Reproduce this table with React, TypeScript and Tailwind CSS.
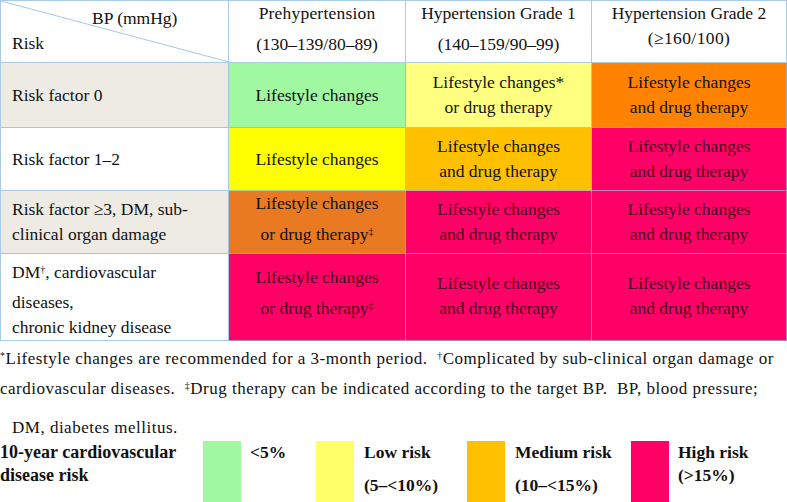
import React from 'react';

type CellProps = {
  bg?: string;
  className?: string;
  children: React.ReactNode;
};

const Cell: React.FC<CellProps> = ({ bg = 'bg-white', className = '', children }) => (
  <div className={`${bg} border-r border-b border-[#8cb8e0]/75 flex flex-col ${className}`}>
    {children}
  </div>
);

const L: React.FC<{ className?: string; children: React.ReactNode }> = ({ className = '', children }) => (
  <span className={`block leading-[25px] whitespace-nowrap ${className}`}>{children}</span>
);

const Sup: React.FC<{ children: React.ReactNode }> = ({ children }) => (
  <sup className="text-[10px]">{children}</sup>
);

const pink = 'bg-[#ff0066] text-[#4a0020]';

export default function App() {
  return (
    <div className="w-[787px] h-[502px] bg-white text-[#111] [font-family:Liberation_Serif,Times_New_Roman,serif] text-[17.5px] overflow-hidden">
      {/* table */}
      <div className="grid grid-cols-[228px_177px_186px_1fr] grid-rows-[62px_65px_63px_63px_87px] border-l border-t border-[#8cb8e0]/75">
        <Cell className="relative pt-[5px]">
          <svg className="absolute inset-0" width="228" height="61">
            <line x1="0" y1="0" x2="228" y2="61" stroke="#a7c7e7" strokeWidth="1" />
          </svg>
          <L className="pl-[91px]">BP (mmHg)</L>
          <L className="pl-[11px]">Risk</L>
        </Cell>
        <Cell className="items-center">
          <L className="tracking-[0.2px]">Prehypertension</L>
          <L className="mt-[6px]">(130–139/80–89)</L>
        </Cell>
        <Cell className="items-center">
          <L>Hypertension Grade 1</L>
          <L className="mt-[6px]">(140–159/90–99)</L>
        </Cell>
        <Cell className="items-center">
          <L>Hypertension Grade 2</L>
          <L className="tracking-[0.4px]">(≥160/100)</L>
        </Cell>

        <Cell bg="bg-[#eeebe5]" className="justify-center pl-[11px]">
          <L>Risk factor 0</L>
        </Cell>
        <Cell bg="bg-[#a0f8a0]" className="justify-center items-center">
          <L>Lifestyle changes</L>
        </Cell>
        <Cell bg="bg-[#ffff80]" className="justify-center items-center">
          <L>Lifestyle changes*</L>
          <L>or drug therapy</L>
        </Cell>
        <Cell bg="bg-[#ff8200]" className="justify-center items-center">
          <L>Lifestyle changes</L>
          <L>and drug therapy</L>
        </Cell>

        <Cell className="justify-center pl-[11px]">
          <L>Risk factor 1–2</L>
        </Cell>
        <Cell bg="bg-[#ffff00]" className="justify-center items-center">
          <L>Lifestyle changes</L>
        </Cell>
        <Cell bg="bg-[#ffc000]" className="justify-center items-center">
          <L>Lifestyle changes</L>
          <L>and drug therapy</L>
        </Cell>
        <Cell bg={pink} className="justify-center items-center">
          <L>Lifestyle changes</L>
          <L>and drug therapy</L>
        </Cell>

        <Cell bg="bg-[#eeebe5]" className="justify-center pl-[11px]">
          <L>Risk factor ≥3, DM, sub-</L>
          <L>clinical organ damage</L>
        </Cell>
        <Cell bg="bg-[#e97a22]" className="items-center">
          <L>Lifestyle changes</L>
          <L className="mt-[6px]">
            or drug therapy<Sup>‡</Sup>
          </L>
        </Cell>
        <Cell bg={pink} className="justify-center items-center">
          <L>Lifestyle changes</L>
          <L>and drug therapy</L>
        </Cell>
        <Cell bg={pink} className="justify-center items-center">
          <L>Lifestyle changes</L>
          <L>and drug therapy</L>
        </Cell>

        <Cell className="pl-[11px] pt-[6px]">
          <L>
            DM<Sup>†</Sup>, cardiovascular
          </L>
          <L className="mt-[5px]">diseases,</L>
          <L>chronic kidney disease</L>
        </Cell>
        <Cell bg={pink} className="items-center pt-[11px]">
          <L>Lifestyle changes</L>
          <L className="mt-[6px]">
            or drug therapy<Sup>‡</Sup>
          </L>
        </Cell>
        <Cell bg={pink} className="items-center pt-[17px]">
          <L>Lifestyle changes</L>
          <L>and drug therapy</L>
        </Cell>
        <Cell bg={pink} className="items-center pt-[17px]">
          <L>Lifestyle changes</L>
          <L>and drug therapy</L>
        </Cell>
      </div>

      {/* footnotes */}
      <div className="pt-[6px] text-[17px] tracking-[0.5px]">
        <div className="leading-[24px] whitespace-nowrap">
          <Sup>*</Sup>Lifestyle changes are recommended for a 3-month period.&nbsp; <Sup>†</Sup>Complicated by sub-clinical organ damage or
        </div>
        <div className="mt-[6px] leading-[24px] whitespace-nowrap">
          cardiovascular diseases.&nbsp; <Sup>‡</Sup>Drug therapy can be indicated according to the target BP.&nbsp; BP, blood pressure;
        </div>
        <div className="mt-[15px] leading-[24px] whitespace-nowrap pl-[12px]">DM, diabetes mellitus.</div>
      </div>

      {/* legend */}
      <div className="mt-[1px] h-[62px] grid grid-cols-[203px_38px_75px_38px_113px_38px_126px_38px_1fr] font-bold text-[17.5px] leading-[23px]">
        <div className="text-[18px]">
          <div>10-year cardiovascular</div>
          <div>disease risk</div>
        </div>
        <div className="bg-[#a0f8a0]" />
        <div className="pl-[9px]">&lt;5%</div>
        <div className="bg-[#ffff6a]" />
        <div className="pl-[10px]">
          <div>Low risk</div>
          <div className="mt-[10px]">(5–&lt;10%)</div>
        </div>
        <div className="bg-[#ffc000]" />
        <div className="pl-[10px]">
          <div>Medium risk</div>
          <div className="mt-[10px]">(10–&lt;15%)</div>
        </div>
        <div className="bg-[#ff0066]" />
        <div className="pl-[9px]">
          <div>High risk</div>
          <div>(&gt;15%)</div>
        </div>
      </div>
    </div>
  );
}
